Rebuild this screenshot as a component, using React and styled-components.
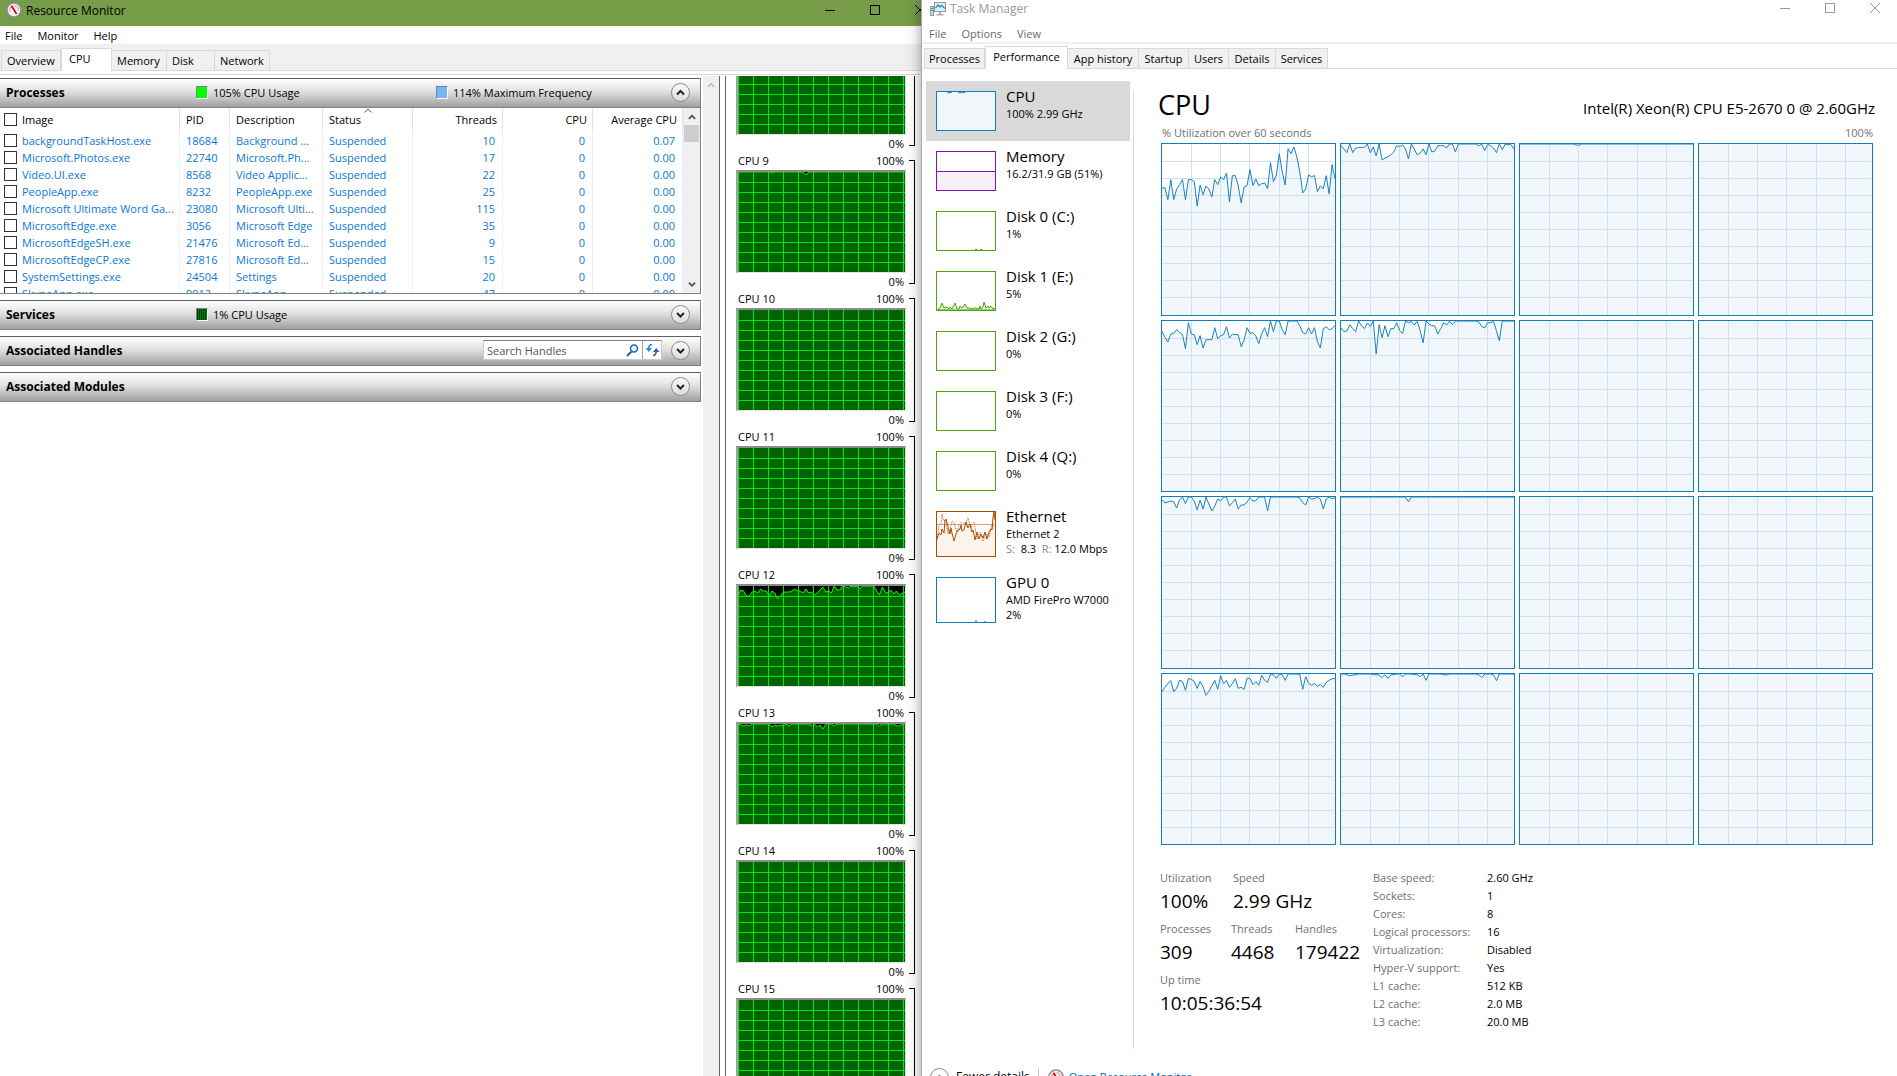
import { useState } from "react";
import styled, { createGlobalStyle } from "styled-components";

const GlobalStyle = createGlobalStyle`
    * { box-sizing: border-box; }
    html, body, #root { height: 100%; }
    body { margin: 0; overflow: hidden; background: white; }
    body, button, input { font-family: "Open Sans", "Noto Sans", sans-serif; font-size: 11px; color: black; }
    button { padding: 0; border: 0; background: none; text-align: left; }
    ul, dl, dd, h1, h2, h3 { margin: 0; padding: 0; font-weight: normal; }
    ul { list-style: none; }
    svg { display: block; }
`

const Desktop = styled.div`
    display: grid;
    grid-template-columns: 921fr 976fr;
    height: 100vh;
    overflow: hidden;
`

/* shared window parts */
const TitleBar = styled.header`
    display: flex;
    align-items: flex-start;
    height: ${p => p.$height}px;
    padding-left: ${p => p.$left}px;
    background: ${p => p.$bg};
    color: ${p => p.$color};
`
const TitleIcon = styled.span`
    padding-top: ${p => p.$top}px;
`
const WindowTitle = styled.h1`
    flex: 1;
    margin-left: 4px;
    font-size: 12px;
    line-height: ${p => p.$line}px;
`
const WindowButton = styled.button`
    display: flex;
    justify-content: center;
    width: 45px;
    padding-top: ${p => p.$top}px;
    color: inherit;
`
const MenuBar = styled.nav`
    display: flex;
    gap: 15px;
    height: ${p => p.$height}px;
    padding-left: ${p => p.$left}px;
    line-height: ${p => p.$height}px;
    background: white;
`
const MenuItem = styled.button`
    color: ${p => p.$color};
`
const Tabs = styled.div`
    display: flex;
    align-items: flex-end;
    height: ${p => p.$height}px;
    padding-left: 1px;
    border-bottom: 1px solid #d9d9d9;
    background: ${p => p.$bg};
`
const Tab = styled.button`
    width: ${p => p.$width}px;
    height: ${p => p.$active ? 23 : 20}px;
    margin-bottom: ${p => p.$active ? -1 : 0}px;
    padding: ${p => p.$active ? "0 0 3px" : "0"};
    padding-left: ${p => p.$centered ? 0 : p.$active ? 7 : 5}px;
    border: 1px solid #d9d9d9;
    border-bottom: 0;
    border-left-width: ${p => p.$first || p.$active ? 1 : 0}px;
    background: ${p => p.$active ? "white" : "#f0f0f0"};
    text-align: ${p => p.$centered ? "center" : "left"};
    white-space: nowrap;
`

/* resource monitor */
const MonitorWindow = styled.section`
    display: flex;
    flex-direction: column;
    min-width: 0;
    min-height: 0;
    margin-right: -21px;
    background: white;
`
const MonitorBody = styled.div`
    display: flex;
    flex: 1;
    min-height: 0;
    margin-top: 3px;
    border-top: 1px solid #d9d9d9;
    padding-top: 1px;
`
const Sections = styled.div`
    display: flex;
    flex-direction: column;
    flex: 1;
    gap: 6px;
    min-width: 0;
    padding: 2px 2px 0 0;
`
const Gutter = styled.div`
    display: flex;
    justify-content: center;
    width: 16px;
    padding-top: 5px;
    background: #f0f0f0;
`
const Splitter = styled.div`
    width: 7px;
    border-left: 1px solid #646464;
    border-right: 1px solid #646464;
`
const SectionHeader = styled.div`
    display: flex;
    align-items: center;
    height: 30px;
    padding: 0 10px 2px 6px;
    border: 1px solid #828282;
    border-top-color: #5f6266;
    border-left: 0;
    background: linear-gradient(#ffffff, #e0e0e0 45%, #a0a0a0);
`
const SectionTitle = styled.h2`
    flex: none;
    width: 190px;
    font-size: 12px;
    font-weight: bold;
`
const Meter = styled.div`
    display: flex;
    flex: none;
    align-items: center;
    gap: 5px;
    width: 240px;

    &:nth-child(3) { width: 200px; }
`
const Swatch = styled.span`
    width: 12px;
    height: 13px;
    border: 1px solid white;
    border-top-color: #808080;
    border-left-color: #808080;
    background: ${p => p.$color};
`
const RoundButton = styled.button`
    display: flex;
    flex: none;
    align-items: center;
    justify-content: center;
    width: 19px;
    height: 19px;
    margin-left: auto;
    border: 1px solid #8c8c8c;
    border-radius: 50%;
    background: linear-gradient(#fafafa, #dcdcdc);
`
const SearchBox = styled.div`
    display: flex;
    align-items: center;
    width: 179px;
    height: 20px;
    margin: 0 0 0 auto;
    border: 1px solid #c8c8c8;
    border-top-color: #808080;
    background: white;

    & + ${RoundButton} { margin-left: 9px; }
`
const SearchInput = styled.input`
    flex: 1;
    min-width: 0;
    padding: 0 0 0 3px;
    border: 0;
    outline: 0;
    &::placeholder { color: #555; }
`
const SearchButton = styled.button`
    display: flex;
    align-items: center;
    justify-content: center;
    width: 19px;
    height: 18px;
    border-left: ${p => p.$divided ? "1px solid #a0a0a0" : "0"};
`
const ProcessPanel = styled.div`
    display: flex;
    height: 186px;
    border: 1px solid #828282;
    border-top: 0;
    border-left: 0;
    overflow: hidden;
`
const ProcessTable = styled.table`
    flex: 1;
    width: 0;
    height: max-content;
    border-collapse: collapse;
    table-layout: fixed;
`
const Th = styled.th`
    position: relative;
    width: ${p => p.$width ? `${p.$width}px` : "auto"};
    height: 24px;
    padding: ${p => p.$right ? "0 5px 2px 0" : "0 0 2px 6px"};
    border-right: 1px solid #e2e2e2;
    font-weight: normal;
    text-align: ${p => p.$right ? "right" : "left"};
`
const SortMark = styled.svg`
    position: absolute;
    top: 0;
    left: 50%;
    margin-left: -4px;
`
const Td = styled.td`
    height: 17px;
    padding: ${p => p.$right ? "0 7px 0 0" : "0 0 0 6px"};
    border-right: 1px solid #e5f1fb;
    color: #0a78d4;
    line-height: 17px;
    text-align: ${p => p.$right ? "right" : "left"};
    white-space: nowrap;
`
const CheckLabel = styled.label`
    display: flex;
    align-items: center;
    gap: 5px;
    margin-left: -2px;
`
const Check = styled.input`
    appearance: none;
    flex: none;
    width: 13px;
    height: 13px;
    margin: 0;
    border: 1px solid #333;
    background: white;
`
const ScrollBar = styled.div`
    display: flex;
    flex-direction: column;
    align-items: center;
    width: 17px;
    padding: 5px 0;
    background: #f0f0f0;
`
const ScrollThumb = styled.div`
    width: 15px;
    height: 17px;
    margin: 4px 0 auto;
    background: #cdcdcd;
`
const CoreColumn = styled.div`
    width: 216px;
    padding-left: 10px;
    overflow: hidden;
`
const CoreList = styled.ul`
    margin-top: -62px;
`
const CoreItem = styled.li`
    display: flex;
    height: 138px;
`
const CorePlot = styled.div`
    width: 170px;
`
const CoreCaption = styled.div`
    display: flex;
    justify-content: ${p => p.$end ? "flex-end" : "space-between"};
    height: 18px;
    padding: 0 2px;
    line-height: 17px;
`
const CoreScreen = styled.div`
    height: 103px;
    border: 1px solid #e3e3e3;
    border-top: 2px solid #8c8c8c;
    border-left: 2px solid #a0a0a0;
    background: black;
`
const Bracket = styled.div`
    width: 6px;
    height: 124px;
    margin: 8px 0 0 3px;
    border: 1px solid black;
    border-left: 0;
`

/* task manager */
const TaskWindow = styled.section`
    position: relative;
    display: flex;
    flex-direction: column;
    min-width: 0;
    height: calc(100vh + 20px);
    border-left: 1px solid #aaa;
    background: white;
    box-shadow: 0 0 14px rgba(0, 0, 0, 0.4);
`
const TaskTabs = styled.div`
    padding-left: 1px;
    border-top: 2px solid #f0f0f0;
`
const TaskBody = styled.div`
    display: flex;
    flex: 1;
    min-height: 0;
`
const SideList = styled.ul`
    width: 208px;
    padding: 12px 0 0 4px;
`
const SideItem = styled.button`
    display: flex;
    align-items: flex-start;
    gap: 10px;
    width: 100%;
    min-height: 60px;
    padding: 6px 10px 4px;
    background: ${p => p.$active ? "#d9d9d9" : "white"};
`
const Thumb = styled.div`
    flex: none;
    width: 60px;
    height: ${p => p.$tall ? 46 : 40}px;
    margin: 4px 0 6px;
    border: 1px solid ${p => p.$color};
    background: white;
`
const SideName = styled.h3`
    font-size: 15px;
    line-height: 19px;
`
const SideText = styled.div`
    line-height: 15px;
    white-space: nowrap;
`
const Dim = styled.span`
    color: #888;
`
const Divider = styled.div`
    width: 1px;
    margin: 22px 0 9px 3px;
    background: #d8d8d8;
`
const Main = styled.main`
    display: flex;
    flex-direction: column;
    flex: 1;
    min-width: 0;
    padding: 18px 22px 0 26px;
`
const Heading = styled.div`
    display: flex;
    justify-content: space-between;
    align-items: flex-end;
`
const BigTitle = styled.h2`
    margin-left: -2px;
    font-size: 27px;
    line-height: 36px;
`
const CpuModel = styled.div`
    font-size: 15px;
    line-height: 29px;
`
const AxisRow = styled.div`
    display: flex;
    justify-content: space-between;
    padding: 0 2px;
    color: #707070;
    line-height: 20px;
`
const ChartGrid = styled.div`
    display: grid;
    grid-template: repeat(4, 1fr) / repeat(4, 1fr);
    flex: 1;
    gap: 4px;
    min-height: 0;
    margin: 0 2px 0 1px;
`
const ChartCell = styled.div`
    min-width: 0;
    min-height: 0;
    border: 1px solid #117dbb;
    overflow: hidden;

    svg { width: 100%; height: 100%; }
`
const Stats = styled.div`
    display: flex;
    padding: 24px 0 27px;
`
const StatRows = styled.div`
    display: flex;
    flex-direction: column;
    gap: 5px;
    width: 213px;
`
const StatRow = styled.dl`
    display: grid;
    grid-template-columns: ${p => p.$first || 71}px 64px 1fr;
`
const StatLabel = styled.dt`
    color: #707070;
    line-height: 18px;
    white-space: nowrap;
`
const StatValue = styled.dd`
    font-size: 19px;
    line-height: 28px;
    white-space: nowrap;
`
const DetailList = styled.dl`
    display: grid;
    grid-template-columns: 114px 1fr;
    line-height: 18px;
`
const Footer = styled.footer`
    display: flex;
    align-items: center;
    height: 38px;
    padding-left: 8px;
`
const FewerButton = styled.button`
    display: flex;
    align-items: center;
    gap: 7px;
    margin-right: 9px;
    padding-right: 8px;
    border-right: 1px solid #c8c8c8;
    font-size: 12px;
`
const MonitorLink = styled.a`
    display: flex;
    align-items: center;
    gap: 5px;
    color: #0066cc;
    text-decoration: none;
`
const FooterText = styled.span`
    padding-bottom: 2px;
`

const processes = [
    ["backgroundTaskHost.exe", 18684, "Background ...", 10, "0.07"],
    ["Microsoft.Photos.exe", 22740, "Microsoft.Ph...", 17, "0.00"],
    ["Video.UI.exe", 8568, "Video Applic...", 22, "0.00"],
    ["PeopleApp.exe", 8232, "PeopleApp.exe", 25, "0.00"],
    ["Microsoft Ultimate Word Ga...", 23080, "Microsoft Ulti...", 115, "0.00"],
    ["MicrosoftEdge.exe", 3056, "Microsoft Edge", 35, "0.00"],
    ["MicrosoftEdgeSH.exe", 21476, "Microsoft Ed...", 9, "0.00"],
    ["MicrosoftEdgeCP.exe", 27816, "Microsoft Ed...", 15, "0.00"],
    ["SystemSettings.exe", 24504, "Settings", 20, "0.00"],
    ["SkypeApp.exe", 9912, "SkypeApp", 47, "0.00"],
]

// distance below 100% for each sample, 100 is the bottom of the screen
const cores = [
    { id: 8, dips: [] },
    { id: 9, dips: [0, 0, 0, 0, 0, 0, 0, 0, 0, 0, 0, 0, 1, 0, 0, 0, 0, 0, 0, 0, 0, 0, 0, 0, 3, 0] },
    { id: 10, dips: [] },
    { id: 11, dips: [] },
    { id: 12, dips: [9, 4, 5, 10, 10, 6, 5, 7, 3, 5, 5, 10, 5, 7, 13, 10, 6, 6, 6, 5, 3, 5, 5, 7, 3, 7, 6, 9, 7, 4, 1, 6, 5, 7, 0, 4, 4, 0, 1, 2, 0, 1, 0, 3, 0, 0, 0, 0, 0, 5, 9, 1, 6, 7, 4, 8, 5, 9, 7, 6] },
    { id: 13, dips: [0, 1, 2, 1, 2, 0, 0, 0, 0, 0, 0, 0, 3, 1, 2, 1, 2, 0, 2, 0, 0, 0, 0, 0, 0, 0, 2, 0, 3, 1, 5, 0, 0, 0, 2, 0, 0, 0, 0, 0, 0, 0, 0, 0, 0, 0, 0, 0, 0, 0, 2, 0, 0, 0, 0, 0, 2, 2, 0, 0] },
    { id: 14, dips: [] },
    { id: 15, dips: [] },
]

// same idea, 512 is the bottom of the chart
const load = [
    [133, 131, 167, 107, 167, 135, 122, 107, 167, 107, 107, 113, 186, 123, 152, 126, 135, 159, 107, 122, 99, 107, 87, 174, 95, 95, 125, 177, 129, 125, 77, 125, 105, 125, 119, 117, 134, 56, 113, 93, 29, 84, 123, 14, 29, 9, 39, 84, 147, 135, 93, 98, 95, 143, 126, 134, 95, 150, 62, 104],
    [4, 15, 26, 0, 26, 12, 11, 10, 10, 0, 26, 9, 36, 0, 48, 42, 39, 32, 24, 5, 8, 3, 15, 45, 0, 15, 33, 27, 15, 32, 0, 24, 21, 5, 5, 5, 12, 0, 0, 24, 0, 0, 0, 0, 0, 0, 0, 5, 0, 20, 2, 4, 12, 26, 0, 17, 0, 2, 2, 15],
    [0, 0, 0, 0, 0, 0, 0, 0, 0, 0, 0, 0, 0, 0, 0, 0, 0, 0, 0, 2, 4, 0],
    [],
    [31, 49, 63, 39, 38, 26, 34, 41, 83, 5, 39, 41, 71, 44, 81, 56, 56, 56, 20, 53, 44, 41, 17, 51, 39, 41, 41, 77, 57, 20, 37, 35, 45, 68, 38, 20, 47, 0, 32, 0, 0, 26, 41, 0, 0, 0, 0, 14, 35, 39, 20, 39, 20, 62, 81, 23, 17, 26, 23, 13],
    [21, 32, 30, 11, 23, 32, 0, 14, 23, 6, 16, 0, 99, 11, 50, 14, 47, 23, 23, 5, 29, 38, 0, 5, 1, 12, 1, 29, 66, 0, 9, 14, 15, 39, 23, 5, 12, 1, 11, 0, 0, 0, 0, 0, 0, 0, 0, 3, 16, 21, 5, 5, 1, 29, 59, 0, 0, 0, 0, 0],
    [],
    [],
    [8, 18, 15, 12, 14, 33, 9, 0, 20, 0, 0, 12, 39, 9, 36, 0, 21, 42, 27, 6, 12, 0, 0, 27, 17, 6, 36, 24, 24, 15, 2, 12, 11, 0, 0, 0, 42, 0, 0, 0, 0, 0, 0, 0, 0, 0, 0, 3, 17, 24, 0, 6, 5, 0, 6, 36, 6, 0, 5, 2],
    [0, 0, 0, 0, 0, 0, 0, 0, 0, 0, 0, 0, 0, 0, 0, 0, 0, 0, 0, 0, 0, 0, 0, 14, 0],
    [],
    [],
    [53, 40, 28, 20, 53, 43, 19, 22, 49, 13, 16, 22, 43, 22, 38, 64, 52, 35, 19, 46, 5, 29, 19, 40, 29, 14, 43, 40, 46, 13, 13, 32, 23, 34, 4, 19, 25, 0, 2, 13, 0, 2, 19, 0, 0, 0, 0, 2, 46, 8, 28, 34, 28, 37, 31, 40, 25, 19, 14, 14],
    [0, 0, 2, 5, 3, 2, 0, 0, 0, 0, 0, 2, 2, 3, 11, 2, 13, 2, 2, 0, 0, 8, 0, 0, 0, 2, 2, 8, 0, 19, 0, 0, 0, 0, 0, 2, 3, 0, 0, 0, 0, 0, 0, 0, 0, 0, 0, 2, 11, 0, 0, 0, 2, 20, 0],
    [],
    [],
]

const devices = [
    { name: "CPU", lines: ["100%  2.99 GHz"], color: "#117dbb", kind: "cpu" },
    { name: "Memory", lines: ["16.2/31.9 GB (51%)"], color: "#8b12ae", kind: "memory" },
    { name: "Disk 0 (C:)", lines: ["1%"], color: "#4da60c", kind: "idle" },
    { name: "Disk 1 (E:)", lines: ["5%"], color: "#4da60c", kind: "disk" },
    { name: "Disk 2 (G:)", lines: ["0%"], color: "#4da60c" },
    { name: "Disk 3 (F:)", lines: ["0%"], color: "#4da60c" },
    { name: "Disk 4 (Q:)", lines: ["0%"], color: "#4da60c" },
    { name: "Ethernet", lines: ["Ethernet 2", <><Dim>S:</Dim>&nbsp; 8.3&nbsp; <Dim>R:</Dim>&nbsp;12.0 Mbps</>], color: "#a74f01", kind: "net", tall: true },
    { name: "GPU 0", lines: ["AMD FirePro W7000", "2%"], color: "#117dbb", kind: "gpu", tall: true },
]

const details = [
    ["Base speed:", "2.60 GHz"],
    ["Sockets:", "1"],
    ["Cores:", "8"],
    ["Logical processors:", "16"],
    ["Virtualization:", "Disabled"],
    ["Hyper-V support:", "Yes"],
    ["L1 cache:", "512 KB"],
    ["L2 cache:", "2.0 MB"],
    ["L3 cache:", "20.0 MB"],
]

const monitorTabs = [["Overview", 60], ["CPU", 51], ["Memory", 55], ["Disk", 48], ["Network", 55]]
const taskTabs = [["Processes", 61], ["Performance", 83], ["App history", 71], ["Startup", 50], ["Users", 40], ["Details", 47], ["Services", 52]]

function GaugeIcon() {
    return (
        <svg width="16" height="16" viewBox="0 0 16 16" aria-hidden="true">
            <circle cx="8" cy="8" r="7" fill="#f4f4f4" stroke="#8f8f8f" strokeWidth="1.6"/>
            <path d="M3.800 9.500a4.500 4.500 0 0 1 1-4.500M8.500 3.500a4.800 4.800 0 0 1 3.800 5" fill="none" stroke="#d88" strokeWidth="1"/>
            <path d="M4.500 4l2-0.500 5 8.500-2 0z" fill="#c8140a"/>
        </svg>
    )
}

function TaskIcon() {
    return (
        <svg width="16" height="16" viewBox="0 0 16 16" aria-hidden="true">
            <rect x="0.5" y="6.500" width="3" height="9" fill="#d4dbd4" stroke="#8f9a94"/>
            <path d="M1 8.500h2M1 10.500h2" stroke="#3faf46"/>
            <rect x="4.5" y="2.500" width="11" height="9" fill="#d8f1fb" stroke="#8e989e"/>
            <path d="M5.500 8l2.500-3 2 2 1.500-1.500 3.500 3" fill="none" stroke="#2b8fc4" strokeWidth="1.3"/>
            <path d="M9 12h2v2h2.500v1.500h-7V14H9z" fill="#aab0b4"/>
        </svg>
    )
}

function Chevron({ up, size = 9, color = "#222", weight = 2 }) {
    return (
        <svg width={size} height={size} viewBox="0 0 9 9" aria-hidden="true">
            <path d={up ? "M1 6.500 4.500 3 8 6.500" : "M1 3 4.500 6.500 8 3"} fill="none" stroke={color} strokeWidth={weight}/>
        </svg>
    )
}

function WindowButtons({ top }) {
    return (
        <>
            <WindowButton $top={top} aria-label="Minimize"><svg width="10" height="10"><path d="M0 5.500h10" stroke="currentColor"/></svg></WindowButton>
            <WindowButton $top={top} aria-label="Maximize"><svg width="10" height="10"><rect x="0.5" y="0.5" width="9" height="9" fill="none" stroke="currentColor"/></svg></WindowButton>
            <WindowButton $top={top} aria-label="Close"><svg width="10" height="10"><path d="M0 0l10 10M10 0L0 10" stroke="currentColor"/></svg></WindowButton>
        </>
    )
}

function TabStrip({ items, start, height, bg, centered }) {
    const [active, setActive] = useState(start)
    return (
        <Tabs role="tablist" $height={height} $bg={bg}>
            {items.map(([name, width], index) =>
                <Tab key={name} role="tab" aria-selected={active === name} $active={active === name} $first={index === 0} $width={width} $centered={centered} onClick={() => setActive(name)}>{name}</Tab>
            )}
        </Tabs>
    )
}

function points(dips, last, width) {
    const padded = Array.from({ length: last + 1 }, (_, i) => dips[i] || 0)
    return padded.map((y, i) => `${(i * width / last).toFixed(2)},${y}`).join(" ")
}

function CoreChart({ core }) {
    const line = points(core.dips, 59, 167)
    return (
        <CoreItem>
            <CorePlot>
                <CoreCaption><span>CPU {core.id}</span><span>100%</span></CoreCaption>
                <CoreScreen>
                    <svg width="167" height="100">
                        <polygon points={`${line} 167,100 0,100`} fill="#006400"/>
                        <g stroke="#00e413" shapeRendering="crispEdges">
                            {Array.from({ length: 12 }, (_, i) => <path key={`v${i}`} d={`M${i * 15 + 0.5} 0V100`}/>)}
                            {Array.from({ length: 9 }, (_, i) => <path key={`h${i}`} d={`M0 ${i * 10 + 10.5}H167`}/>)}
                        </g>
                        {core.dips.length > 0 ? <polyline points={line} fill="none" stroke="#00ff00"/> : null}
                    </svg>
                </CoreScreen>
                <CoreCaption $end>0%</CoreCaption>
            </CorePlot>
            <Bracket/>
        </CoreItem>
    )
}

function LoadChart({ dips }) {
    const line = points(dips, 59, 520)
    return (
        <ChartCell>
            <svg viewBox="0 0 520 512" preserveAspectRatio="none">
                <polygon points={`${line} 520,512 0,512`} fill="#f1f6fa"/>
                <g stroke="#cde2ef" shapeRendering="crispEdges">
                    {[1, 2, 3, 4, 5].map(i => <path key={`v${i}`} d={`M${i * 88} 0V512`} vectorEffect="non-scaling-stroke"/>)}
                    {[1, 2, 3, 4, 5, 6, 7, 8, 9].map(i => <path key={`h${i}`} d={`M0 ${i * 51 + 2}H516`} vectorEffect="non-scaling-stroke"/>)}
                </g>
                {dips.length > 0 ? <polyline points={line} fill="none" stroke="#1c82bd" vectorEffect="non-scaling-stroke"/> : null}
            </svg>
        </ChartCell>
    )
}

function ThumbDrawing({ kind }) {
    switch (kind) {
        case "cpu":
            return <svg width="58" height="38"><rect width="58" height="38" fill="#f1f6fa"/><path d="M10 0l2 1 3-1M21 0l2 1 2-1 2 1 1-1" fill="none" stroke="#117dbb"/></svg>
        case "memory":
            return <svg width="58" height="38"><rect y="19" width="58" height="19" fill="#f4f0f5"/><path d="M0 19.500h58" stroke="#8b12ae"/></svg>
        case "idle":
            return <svg width="58" height="38"><path d="M38 38l1-1 1 1M43 38l1-1 1 1" fill="none" stroke="#4da60c"/></svg>
        case "disk":
            return <svg width="58" height="38"><path d="M1 37 3 36 5 31 7 36 10 35 12 37 13 35 15 37 18 31 20 37 22 37 23 34 25 36 28 32 30 36 33 36 34 37 38 36 42 37 43 34 44 37 46 35 47 30 49 36 51 34 52 36 54 34 56 37 57 36V38H1z" fill="#e4f2d8" stroke="#4da60c"/></svg>
        case "net":
            return (
                <svg width="58" height="44">
                    <path d="M0 27 2 21 4 23 5 17 7 21 8 8 10 11 12 19 14 16 17 29 21 18 24 13 27 18 29 10 31 16 33 12 35 20 38 28 40 20 42 27 44 22 46 26 48 20 50 27 52 20 55 18 57 0 58 8V44H0z" fill="#fcf3eb"/>
                    <path d="M0 12.500h58" stroke="#d8a47c"/>
                    <path d="M0 28 2 13 4 12 5 2 7 9 9 8 11 22 13 18 15 9 17 11 20 20 22 13 25 10 28 12 31 6 34 16 37 10 40 27 43 20 46 29 49 22 52 25 55 12 57 16" fill="none" stroke="#d9733f" strokeDasharray="1.500 1"/>
                    <path d="M0 27 2 21 4 23 5 17 7 21 8 8 9 7 10 11 12 19 13 22 14 16 15 21 17 29 19 22 21 18 23 17 24 13 25 19 27 18 29 10 31 16 33 12 35 20 36 18 38 28 40 20 42 27 44 22 46 26 48 20 50 27 52 20 54 17 55 18 56 5 57 0 58 8" fill="none" stroke="#a74f01"/>
                </svg>
            )
        case "gpu":
            return <svg width="58" height="44"><path d="M38 44l1-2 1 2M47 44l1-1 1 1" fill="none" stroke="#5aa5d0"/></svg>
        default:
            return null
    }
}

function ResourceMonitor() {
    return (
        <MonitorWindow>
            <TitleBar $height={26} $left={6} $bg="#769c48" $color="black">
                <TitleIcon $top={2}><GaugeIcon/></TitleIcon>
                <WindowTitle $line={22}>Resource Monitor</WindowTitle>
                <WindowButtons top={5}/>
            </TitleBar>
            <MenuBar $height={18} $left={5}>
                {["File", "Monitor", "Help"].map(name => <MenuItem key={name} $color="black">{name}</MenuItem>)}
            </MenuBar>
            <TabStrip items={monitorTabs} start="CPU" height={27} bg="#f0f0f0"/>
            <MonitorBody>
                <Sections>
                    <div>
                        <SectionHeader>
                            <SectionTitle>Processes</SectionTitle>
                            <Meter><Swatch $color="#00ff00"/>105% CPU Usage</Meter>
                            <Meter><Swatch $color="#74b5fc"/>114% Maximum Frequency</Meter>
                            <RoundButton aria-label="Collapse Processes"><Chevron up/></RoundButton>
                        </SectionHeader>
                        <ProcessPanel>
                            <ProcessTable>
                                <thead>
                                    <tr>
                                        <Th><CheckLabel><Check type="checkbox"/>Image</CheckLabel></Th>
                                        <Th $width={50}>PID</Th>
                                        <Th $width={93}>Description</Th>
                                        <Th $width={90}>Status<SortMark width="8" height="5"><path d="M0.500 4.500 4 1l3.500 3.500" fill="none" stroke="#555"/></SortMark></Th>
                                        <Th $width={90} $right>Threads</Th>
                                        <Th $width={90} $right>CPU</Th>
                                        <Th $width={90} $right>Average CPU</Th>
                                    </tr>
                                </thead>
                                <tbody>
                                    {processes.map(([image, pid, description, threads, average]) =>
                                        <tr key={pid}>
                                            <Td><CheckLabel><Check type="checkbox"/>{image}</CheckLabel></Td>
                                            <Td>{pid}</Td>
                                            <Td>{description}</Td>
                                            <Td>Suspended</Td>
                                            <Td $right>{threads}</Td>
                                            <Td $right>0</Td>
                                            <Td $right>{average}</Td>
                                        </tr>
                                    )}
                                </tbody>
                            </ProcessTable>
                            <ScrollBar>
                                <Chevron up size={8} color="#505050"/>
                                <ScrollThumb/>
                                <Chevron size={8} color="#505050"/>
                            </ScrollBar>
                        </ProcessPanel>
                    </div>
                    <SectionHeader>
                        <SectionTitle>Services</SectionTitle>
                        <Meter><Swatch $color="repeating-linear-gradient(90deg, #003c00 0 1px, #008000 1px 2px)"/>1% CPU Usage</Meter>
                        <RoundButton aria-label="Expand Services"><Chevron/></RoundButton>
                    </SectionHeader>
                    <SectionHeader>
                        <SectionTitle>Associated Handles</SectionTitle>
                        <SearchBox>
                            <SearchInput aria-label="Search Handles" placeholder="Search Handles"/>
                            <SearchButton aria-label="Search">
                                <svg width="13" height="13"><circle cx="8" cy="4.500" r="3.500" fill="#e6f2fc" stroke="#2a62b0" strokeWidth="1.500"/><path d="M5.500 7.500 1 12" stroke="#2a5ca8" strokeWidth="2"/></svg>
                            </SearchButton>
                            <SearchButton $divided aria-label="Refresh">
                                <svg width="15" height="14"><path d="M7 1.500C4.500 1.500 3.800 3 3.800 6" fill="none" stroke="#2f86cf" strokeWidth="1.600"/><path d="M0.500 5h6.500L3.800 9z" fill="#2f86cf"/><path d="M8 12.500c2.500 0 3.200-1.500 3.200-4.500" fill="none" stroke="#2a62b0" strokeWidth="1.600"/><path d="M8 9h6.500L11.200 5z" fill="#2a62b0"/></svg>
                            </SearchButton>
                        </SearchBox>
                        <RoundButton aria-label="Expand Associated Handles"><Chevron/></RoundButton>
                    </SectionHeader>
                    <SectionHeader>
                        <SectionTitle>Associated Modules</SectionTitle>
                        <RoundButton aria-label="Expand Associated Modules"><Chevron/></RoundButton>
                    </SectionHeader>
                </Sections>
                <Gutter><Chevron up size={8} color="#bfbfbf"/></Gutter>
                <Splitter/>
                <CoreColumn>
                    <CoreList>
                        {cores.map(core => <CoreChart key={core.id} core={core}/>)}
                    </CoreList>
                </CoreColumn>
            </MonitorBody>
        </MonitorWindow>
    )
}

function TaskManager() {
    const [selected, setSelected] = useState("CPU")
    return (
        <TaskWindow>
            <TitleBar $height={25} $left={8} $bg="white" $color="#999">
                <TitleIcon $top={0}><TaskIcon/></TitleIcon>
                <WindowTitle $line={18}>Task Manager</WindowTitle>
                <WindowButtons top={3}/>
            </TitleBar>
            <MenuBar $height={17} $left={7}>
                {["File", "Options", "View"].map(name => <MenuItem key={name} $color="#6b6b6b">{name}</MenuItem>)}
            </MenuBar>
            <TaskTabs>
                <TabStrip items={taskTabs} start="Performance" height={25} bg="white" centered/>
            </TaskTabs>
            <TaskBody>
                <SideList>
                    {devices.map(device =>
                        <li key={device.name}>
                            <SideItem $active={selected === device.name} onClick={() => setSelected(device.name)}>
                                <Thumb $color={device.color} $tall={device.tall}><ThumbDrawing kind={device.kind}/></Thumb>
                                <div>
                                    <SideName>{device.name}</SideName>
                                    {device.lines.map((line, index) => <SideText key={index}>{line}</SideText>)}
                                </div>
                            </SideItem>
                        </li>
                    )}
                </SideList>
                <Divider/>
                <Main>
                    <Heading>
                        <BigTitle>CPU</BigTitle>
                        <CpuModel>Intel(R) Xeon(R) CPU E5-2670 0 @ 2.60GHz</CpuModel>
                    </Heading>
                    <AxisRow><span>% Utilization over 60 seconds</span><span>100%</span></AxisRow>
                    <ChartGrid>
                        {load.map((dips, index) => <LoadChart key={index} dips={dips}/>)}
                    </ChartGrid>
                    <Stats>
                        <StatRows>
                            <StatRow $first={73}>
                                <div><StatLabel>Utilization</StatLabel><StatValue>100%</StatValue></div>
                                <div><StatLabel>Speed</StatLabel><StatValue>2.99 GHz</StatValue></div>
                            </StatRow>
                            <StatRow>
                                <div><StatLabel>Processes</StatLabel><StatValue>309</StatValue></div>
                                <div><StatLabel>Threads</StatLabel><StatValue>4468</StatValue></div>
                                <div><StatLabel>Handles</StatLabel><StatValue>179422</StatValue></div>
                            </StatRow>
                            <StatRow>
                                <div><StatLabel>Up time</StatLabel><StatValue>10:05:36:54</StatValue></div>
                            </StatRow>
                        </StatRows>
                        <DetailList>
                            {details.map(([label, value]) => [
                                <StatLabel key={label}>{label}</StatLabel>,
                                <dd key={`${label} value`}>{value}</dd>,
                            ])}
                        </DetailList>
                    </Stats>
                </Main>
            </TaskBody>
            <Footer>
                <FewerButton>
                    <svg width="19" height="19"><circle cx="9.500" cy="9.500" r="9" fill="white" stroke="#8c8c8c"/><path d="M6 11l3.500-3.500L13 11" fill="none" stroke="#8c8c8c" strokeWidth="1.500"/></svg>
                    <FooterText>Fewer details</FooterText>
                </FewerButton>
                <MonitorLink href="#monitor"><GaugeIcon/><FooterText>Open Resource Monitor</FooterText></MonitorLink>
            </Footer>
        </TaskWindow>
    )
}

function App() {
    return (
        <Desktop>
            <GlobalStyle/>
            <ResourceMonitor/>
            <TaskManager/>
        </Desktop>
    )
}

export default App;
